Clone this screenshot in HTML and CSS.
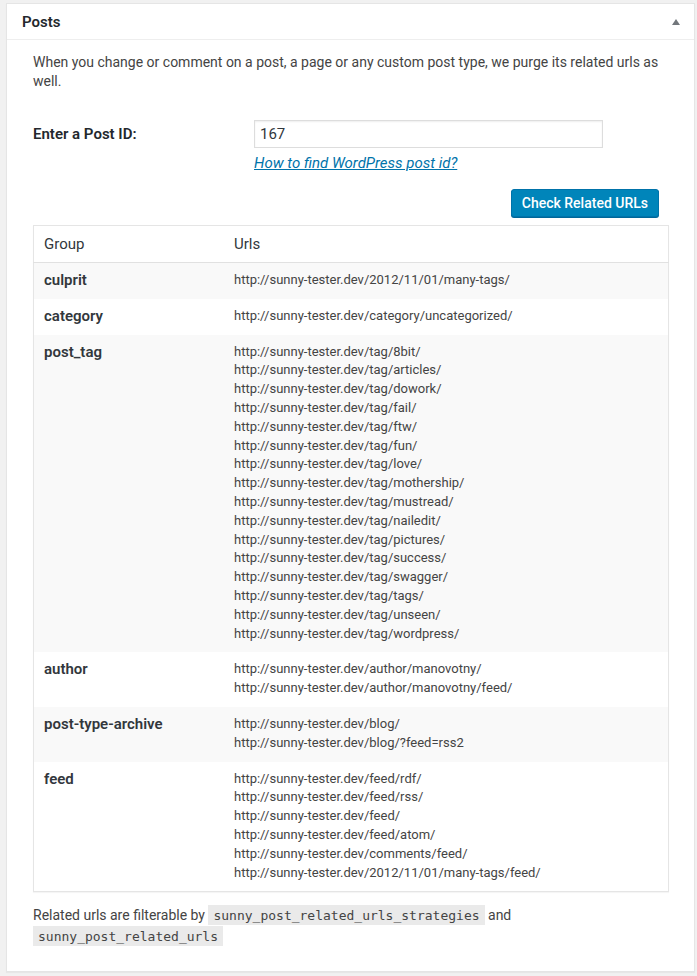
FILE: index.html
```html
<!DOCTYPE html>
<html>
<head>
<meta charset="utf-8">
<link rel="stylesheet" href="styles.css">
</head>
<body>
<div class="postbox">
  <div class="hndle">
    <h2>Posts</h2>
    <span class="toggle"></span>
  </div>
  <div class="inside">
    <p class="desc">When you change or comment on a post, a page or any custom post type, we purge its related urls as well.</p>
    <div class="form-row">
      <label class="label">Enter a Post ID:</label>
      <div class="field">
        <div class="input">167</div>
        <a class="help" href="#">How to find WordPress post id?</a>
      </div>
    </div>
    <div class="actions"><button class="button">Check Related URLs</button></div>
    <table class="widefat">
      <thead><tr><th class="col-group">Group</th><th>Urls</th></tr></thead>
      <tbody>
        <tr class="alt"><td class="group">culprit</td><td class="urls">http://sunny-tester.dev/2012/11/01/many-tags/</td></tr>
        <tr><td class="group">category</td><td class="urls">http://sunny-tester.dev/category/uncategorized/</td></tr>
        <tr class="alt"><td class="group">post_tag</td><td class="urls">http://sunny-tester.dev/tag/8bit/<br>http://sunny-tester.dev/tag/articles/<br>http://sunny-tester.dev/tag/dowork/<br>http://sunny-tester.dev/tag/fail/<br>http://sunny-tester.dev/tag/ftw/<br>http://sunny-tester.dev/tag/fun/<br>http://sunny-tester.dev/tag/love/<br>http://sunny-tester.dev/tag/mothership/<br>http://sunny-tester.dev/tag/mustread/<br>http://sunny-tester.dev/tag/nailedit/<br>http://sunny-tester.dev/tag/pictures/<br>http://sunny-tester.dev/tag/success/<br>http://sunny-tester.dev/tag/swagger/<br>http://sunny-tester.dev/tag/tags/<br>http://sunny-tester.dev/tag/unseen/<br>http://sunny-tester.dev/tag/wordpress/</td></tr>
        <tr><td class="group">author</td><td class="urls">http://sunny-tester.dev/author/manovotny/<br>http://sunny-tester.dev/author/manovotny/feed/</td></tr>
        <tr class="alt"><td class="group">post-type-archive</td><td class="urls">http://sunny-tester.dev/blog/<br>http://sunny-tester.dev/blog/?feed=rss2</td></tr>
        <tr><td class="group">feed</td><td class="urls">http://sunny-tester.dev/feed/rdf/<br>http://sunny-tester.dev/feed/rss/<br>http://sunny-tester.dev/feed/<br>http://sunny-tester.dev/feed/atom/<br>http://sunny-tester.dev/comments/feed/<br>http://sunny-tester.dev/2012/11/01/many-tags/feed/</td></tr>
      </tbody>
    </table>
    <p class="note">Related urls are filterable by <code>sunny_post_related_urls_strategies</code> and <code>sunny_post_related_urls</code></p>
  </div>
</div>
</body>
</html>
```
FILE: styles.css
```css
html, body {
  margin: 0;
  background: #f1f1f1;
}
body {
  padding: 3px 2px 7px 6px;
  font-family: Roboto, "Liberation Sans", sans-serif;
  color: #444;
  font-size: 14px;
}
.postbox {
  background: #fff;
  border: 1px solid #e5e5e5;
  box-shadow: 0 1px 1px rgba(0,0,0,.04);
}
.hndle {
  height: 35px;
  border-bottom: 1px solid #eee;
  display: flex;
  align-items: center;
  justify-content: space-between;
  padding: 0 14px 0 15px;
}
.hndle h2 {
  margin: 0;
  font-size: 15px;
  font-weight: 600;
  color: #23282d;
}
.toggle {
  width: 0;
  height: 0;
  border-left: 4px solid transparent;
  border-right: 4px solid transparent;
  border-bottom: 6px solid #72777c;
}
.inside {
  padding: 0 25px 24px 26px;
}
.desc {
  margin: 13px 0 0;
  line-height: 19px;
  font-size: 14px;
}
.form-row {
  display: flex;
  margin-top: 29px;
}
.label {
  width: 221px;
  font-size: 15px;
  font-weight: 600;
  color: #23282d;
  padding-top: 5px;
}
.field {
  display: flex;
  flex-direction: column;
}
.input {
  width: 337px;
  height: 26px;
  border: 1px solid #ddd;
  box-shadow: inset 0 1px 2px rgba(0,0,0,.07);
  padding: 0 5px;
  font-size: 15px;
  line-height: 26px;
  color: #32373c;
}
.help {
  margin-top: 6px;
  font-size: 15px;
  font-style: italic;
  color: #0073aa;
  text-decoration: underline;
}
.actions {
  display: flex;
  justify-content: flex-end;
  margin-top: 17px;
  padding-right: 10px;
}
.button {
  height: 28px;
  padding: 0 10px 1px;
  background: #0085ba;
  border: 1px solid #0073aa;
  border-radius: 3px;
  box-shadow: 0 1px 0 #006799;
  color: #fff;
  font-family: inherit;
  font-size: 14px;
  font-weight: 500;
}
.widefat {
  margin-top: 8px;
  width: 100%;
  border-collapse: collapse;
  border: 1px solid #e5e5e5;
  box-shadow: 0 1px 1px rgba(0,0,0,.04);
}
.widefat th {
  text-align: left;
  font-weight: 400;
  font-size: 15px;
  color: #32373c;
  height: 36px;
  padding: 0 10px;
  border-bottom: 1px solid #e1e1e1;
}
.col-group { width: 170px; }
.widefat td {
  vertical-align: top;
  padding: 8px 10px 9px;
  line-height: 18.8px;
}
.widefat tr.alt td { background: #f9f9f9; }
.group {
  font-size: 15px;
  font-weight: 600;
  color: #32373c;
}
.urls {
  font-size: 13px;
  color: #444;
}
.note {
  margin: 13px 0 0;
  line-height: 20px;
}
code {
  font-family: "DejaVu Sans Mono", monospace;
  font-size: 13px;
  background: #eaeaea;
  padding: 3px 5px 2px;
}
```
